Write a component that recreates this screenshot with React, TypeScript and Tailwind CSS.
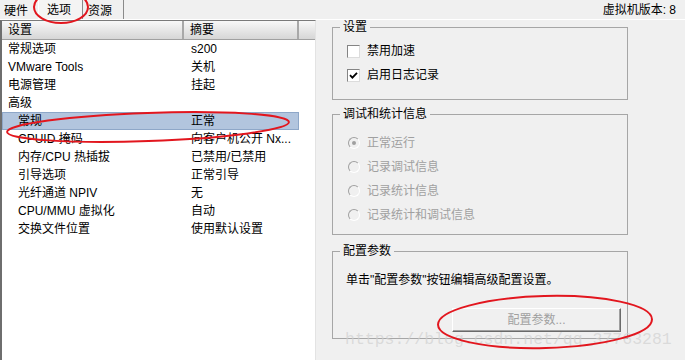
const FONT = "font-['Liberation_Sans','Noto_Sans_CJK_SC',sans-serif]";

type Row = { name: string; value: string; indent?: boolean; selected?: boolean };

const ROWS: Row[] = [
  { name: "常规选项", value: "s200" },
  { name: "VMware Tools", value: "关机" },
  { name: "电源管理", value: "挂起" },
  { name: "高级", value: "" },
  { name: "常规", value: "正常", indent: true, selected: true },
  { name: "CPUID 掩码", value: "向客户机公开 Nx...", indent: true },
  { name: "内存/CPU 热插拔", value: "已禁用/已禁用", indent: true },
  { name: "引导选项", value: "正常引导", indent: true },
  { name: "光纤通道 NPIV", value: "无", indent: true },
  { name: "CPU/MMU 虚拟化", value: "自动", indent: true },
  { name: "交换文件位置", value: "使用默认设置", indent: true },
];

const Checkbox = ({ checked }: { checked?: boolean }) => (
  <span className="flex h-[13px] w-[13px] items-center justify-center border border-t-[#848484] border-l-[#848484] border-r-[#dcdcdc] border-b-[#dcdcdc] bg-white">
    {checked && (
      <svg width="9" height="9" viewBox="0 0 9 9">
        <path d="M1 4.2 L3.4 6.6 L8 1.8" fill="none" stroke="#000" strokeWidth="1.8" />
      </svg>
    )}
  </span>
);

const Radio = ({ checked }: { checked?: boolean }) => (
  <span className="flex h-[12px] w-[12px] items-center justify-center rounded-full border border-t-[#a0a0a0] border-l-[#a0a0a0] border-r-white border-b-white bg-[#f0f0f0]">
    {checked && <span className="h-[4px] w-[4px] rounded-full bg-[#a0a0a0]" />}
  </span>
);

const Group = ({
  title,
  className,
  children,
}: {
  title: string;
  className: string;
  children: React.ReactNode;
}) => (
  <fieldset className={`w-[296px] border border-[#a6a6a6] ${className}`}>
    <legend className="ml-[7px] px-[3px] leading-[14px]">{title}</legend>
    {children}
  </fieldset>
);

export default function App() {
  return (
    <div className={`relative h-[360px] w-[685px] overflow-hidden bg-[#f0f0f0] text-[12px] text-black ${FONT}`}>
      {/* tab strip */}
      <div className="flex h-[20px] items-stretch border-b border-white">
        <div className="flex w-[38px] items-center pl-[4px] pt-[2px]">硬件</div>
        <div className="flex w-[45px] items-center border-l border-r border-l-white border-r-[#8a8a8a] bg-[#f4f4f4] pl-[8px]">
          选项
        </div>
        <div className="flex w-[41px] items-center border-r border-[#8a8a8a] pl-[5px] pt-[2px]">资源</div>
        <div className="ml-auto flex items-center pr-[9px]">虚拟机版本: 8</div>
      </div>

      <div className="flex h-[340px]">
        {/* list */}
        <div className="flex w-[316px] flex-col border-t border-l-2 border-r border-t-[#7a7a7a] border-l-[#6e6e6e] border-r-[#e3e3e3] bg-white">
          <div className="flex h-[19px] border-b border-[#a0a0a0] bg-linear-to-b from-[#f8f8f8] to-[#d6d6d6] leading-[18px]">
            <div className="w-[182px] border-r-2 border-[#a8a8a8] pl-[6px]">设置</div>
            <div className="w-[115px] border-r-2 border-[#a8a8a8] pl-[6px]">摘要</div>
            <div className="flex-1" />
          </div>
          {ROWS.map((r) => (
            <div
              key={r.name}
              className={`flex h-[18px] w-[297px] leading-[16px] ${
                r.selected ? "border border-[#8ea7c8] bg-[#b2c5de]" : "border border-transparent"
              }`}
            >
              <div className={`w-[182px] ${r.indent ? "pl-[15px]" : "pl-[5px]"}`}>{r.name}</div>
              <div className="flex-1 truncate pl-[6px]">{r.value}</div>
            </div>
          ))}
        </div>

        {/* right side */}
        <div className="flex flex-1 flex-col pl-[16px]">
          <Group title="设置" className="h-[80px]">
            <div className="mt-[5px] flex flex-col pl-[14px]">
              <label className="flex h-[24px] items-center gap-[7px]">
                <Checkbox />
                禁用加速
              </label>
              <label className="flex h-[24px] items-center gap-[7px]">
                <Checkbox checked />
                启用日志记录
              </label>
            </div>
          </Group>

          <Group title="调试和统计信息" className="mt-[7px] h-[128px]">
            <div className="mt-[10px] flex flex-col pl-[15px] text-[#a0a0a0]">
              {["正常运行", "记录调试信息", "记录统计信息", "记录统计和调试信息"].map((t, i) => (
                <div key={t} className="flex h-[24px] items-center gap-[7px]">
                  <Radio checked={i === 0} />
                  {t}
                </div>
              ))}
            </div>
          </Group>

          <Group title="配置参数" className="mt-[9px] h-[95px]">
            <div className="mt-[14px] pl-[13px] leading-[16px]">单击"配置参数"按钮编辑高级配置设置。</div>
            <div className="ml-[119px] mt-[20px] flex h-[24px] w-[169px] items-center justify-center border border-t-white border-l-white border-r-[#6a6a6a] border-b-[#6a6a6a] bg-[#f0f0f0] text-[#a0a0a0] shadow-[inset_-1px_-1px_0_#a0a0a0]">
              配置参数...
            </div>
          </Group>
        </div>
      </div>

      {/* watermark */}
      <div className="pointer-events-none absolute left-[345px] top-[330px] font-['Liberation_Mono',monospace] text-[16.5px] leading-[20px] text-[#d0d0d0]/70">
        https://blog.csdn.net/qq_37763281
      </div>

      {/* red annotations */}
      <svg className="pointer-events-none absolute inset-0" width="685" height="360" viewBox="0 0 685 360">
        <g fill="none" stroke="#e2161e" strokeWidth="2">
          <ellipse cx="61" cy="7" rx="27" ry="16" />
          <ellipse cx="148" cy="127" rx="141" ry="14" transform="rotate(-2 148 127)" />
          <ellipse cx="545" cy="322" rx="107" ry="26" transform="rotate(-1.5 545 322)" />
        </g>
      </svg>
    </div>
  );
}
